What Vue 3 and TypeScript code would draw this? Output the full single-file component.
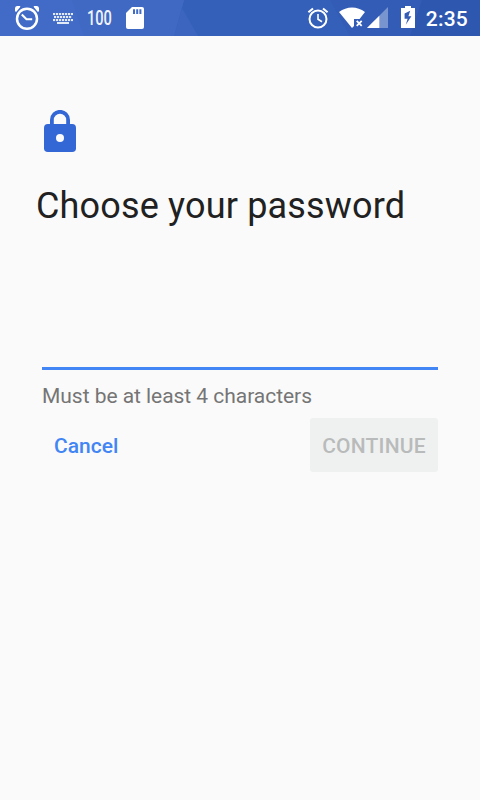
<script setup lang="ts">
import { computed, ref } from 'vue'

const minLength = 4
const percent = 100
const time = '2:35'
const password = ref('')
const ready = computed(() => password.value.length >= minLength)
const keyRows = [
  { y: 0, start: 0, count: 7 },
  { y: 3, start: 1, count: 6 },
  { y: 6, start: 0, count: 7 },
]
</script>

<template>
  <div class="screen">
    <header class="status">
      <svg class="facets" viewBox="0 0 480 36" preserveAspectRatio="none" aria-hidden="true">
        <rect width="480" height="36" fill="#3560ba" />
        <path d="M0 0H184L174 36H0Z" fill="#416bc6" />
        <path d="M72 0H184L174 36H84Z" fill="#3f69c3" />
        <path d="M182 8L198 36H174Z" fill="#3b65bf" />
        <path d="M330 0H480V36H350Z" fill="#325cb5" />
        <path d="M422 0H480V36H410Z" fill="#2e57b0" />
      </svg>
      <div class="group">
        <svg class="alarm-large" viewBox="0 0 26 26">
          <circle cx="13" cy="13.8" r="10" fill="none" stroke="#fff" stroke-width="2.5" />
          <path d="M7.8 9.5L12.5 14.2H18.2" fill="none" stroke="#fff" stroke-width="2.1" />
          <path d="M1 6.3V3Q1.4 1.1 3.2 1H6.3Q6.5 2.2 5 3.4L2.6 6.4Q1.8 7 1 6.3ZM25 6.3V3Q24.6 1.1 22.8 1H19.7Q19.5 2.2 21 3.4L23.4 6.4Q24.2 7 25 6.3Z" fill="#fff" />
        </svg>
        <svg class="keyboard" viewBox="0 0 20 11">
          <g fill="#fff" fill-opacity=".85">
            <template v-for="row in keyRows" :key="row.y">
              <rect v-for="n in row.count" :key="n" :x="row.start + (n - 1) * 3" :y="row.y" width="2.2" height="2.1" />
            </template>
            <rect x="4" y="9" width="12" height="2" />
          </g>
        </svg>
        <span class="percent">{{ percent }}</span>
        <svg class="sd" viewBox="0 0 18 22">
          <path d="M6 0H16Q18 0 18 2V20Q18 22 16 22H2Q0 22 0 20V6Z" fill="#fff" />
          <path d="M7 2.2H9V7H7ZM10.2 2.2H12.2V7H10.2ZM13.4 2.2H15.4V7H13.4Z" fill="#416bc6" />
        </svg>
      </div>
      <div class="group right">
        <svg class="alarm-small" viewBox="0 0 22 22">
          <g fill="none" stroke="#fff" stroke-width="2">
            <circle cx="11" cy="12" r="8.5" />
            <path d="M1.4 5.3L6 1.5M20.6 5.3L16 1.5" />
            <path d="M11 7V12.3L15 14.7" stroke-width="1.6" />
          </g>
        </svg>
        <svg class="wifi" viewBox="0 0 26 22">
          <path d="M0 5Q6 .4 13 .4T26 5L20.6 12H15V19L13 21Z" fill="#fff" />
          <path d="M17.7 13.8L22.7 18.8M22.7 13.8L17.7 18.8" stroke="#fff" stroke-width="1.8" />
        </svg>
        <svg class="signal" viewBox="0 0 21 21">
          <path d="M0 21L21 0V21Z" fill="#fff" fill-opacity=".35" />
          <path d="M0 21L12.3 8.7V21Z" fill="#fff" />
        </svg>
        <svg class="battery" viewBox="0 0 14 22">
          <path d="M4 0H10V2H14V22H0V2H4Z" fill="#fff" />
          <path d="M9.2 4.8L3.6 7.5V12.8H6.6L4.8 18.8L10.4 10.2H7.4Z" fill="#325cb5" />
        </svg>
        <span class="time">{{ time }}</span>
      </div>
    </header>

    <main class="content">
      <svg class="lock" viewBox="0 0 32 42" aria-hidden="true">
        <path d="M7.9 15V9.9a8.1 8.1 0 0 1 16.2 0V15" fill="none" stroke="#3367d6" stroke-width="3.8" />
        <rect y="14" width="32" height="28" rx="3.8" fill="#3367d6" />
        <circle cx="16" cy="28" r="4" fill="#fafafa" />
      </svg>
      <h1 class="title">Choose your password</h1>
      <input v-model="password" class="field" type="password" aria-label="Password" />
      <p class="hint">Must be at least {{ minLength }} characters</p>
      <div class="actions">
        <button class="button cancel" type="button">Cancel</button>
        <button class="button continue" type="button" :disabled="!ready">CONTINUE</button>
      </div>
    </main>
  </div>
</template>

<style>
body {
  margin: 0;
  background: #fafafa;
}
</style>

<style scoped>
.screen {
  width: 480px;
  height: 800px;
  overflow: hidden;
  background: #fafafa;
  font-family: Roboto, "Liberation Sans", sans-serif;
}
.status {
  position: relative;
  display: flex;
  justify-content: space-between;
  height: 36px;
  color: #fff;
}
.facets {
  position: absolute;
  inset: 0;
  width: 100%;
  height: 100%;
}
.group {
  position: relative;
  display: flex;
  align-items: flex-start;
  padding-left: 14px;
}
.group svg {
  display: block;
  flex: none;
}
.right {
  padding: 0 12px 0 0;
}
.alarm-large {
  width: 26px;
  height: 26px;
  margin-top: 5px;
}
.keyboard {
  width: 20px;
  height: 11px;
  margin: 13px 0 0 13px;
}
.percent {
  width: 36px;
  height: 36px;
  margin: 0 -10px 0 14px;
  font-size: 19.5px;
  font-weight: 500;
  line-height: 37px;
  opacity: .92;
  transform: scaleX(.75);
  transform-origin: left;
}
.sd {
  width: 18px;
  height: 22px;
  margin: 7px 0 0 13px;
}
.alarm-small {
  width: 22px;
  height: 22px;
  margin-top: 7px;
}
.wifi {
  width: 26px;
  height: 22px;
  margin: 7px 0 0 10px;
}
.signal {
  width: 21px;
  height: 21px;
  margin: 7px 0 0 2px;
}
.battery {
  width: 14px;
  height: 22px;
  margin: 6px 0 0 13px;
}
.time {
  margin-left: 11px;
  font-size: 21px;
  font-weight: 500;
  letter-spacing: .2px;
  line-height: 38px;
}
.content {
  display: flex;
  flex-direction: column;
  padding: 74px 42px 0;
}
.lock {
  width: 32px;
  height: 42px;
  margin-left: 2px;
}
.title {
  margin: 33px 0 0 -6px;
  color: #212121;
  font-size: 36px;
  font-weight: 400;
  letter-spacing: .17px;
  line-height: 42px;
  white-space: nowrap;
}
.field {
  box-sizing: border-box;
  width: 100%;
  height: 54px;
  margin: 89px 0 0;
  padding: 0;
  border: 0;
  border-bottom: 3px solid #4285f4;
  border-radius: 0;
  outline: 0;
  background: transparent;
  font: 27px Roboto, sans-serif;
}
.hint {
  margin: 14px 0 0;
  color: #757575;
  font-size: 21px;
  letter-spacing: -.04px;
  line-height: 25px;
}
.actions {
  display: flex;
  justify-content: space-between;
  margin-top: 9px;
}
.button {
  height: 54px;
  padding: 2px 12px 0;
  border: 0;
  border-radius: 3px;
  font: 500 21px Roboto, "Liberation Sans", sans-serif;
}
.cancel {
  background: transparent;
  color: #4285f4;
}
.continue {
  width: 128px;
  padding-inline: 0;
  background: #eff1f1;
  color: #4285f4;
  letter-spacing: .2px;
}
.continue:disabled {
  color: #b9bbbb;
}
</style>
